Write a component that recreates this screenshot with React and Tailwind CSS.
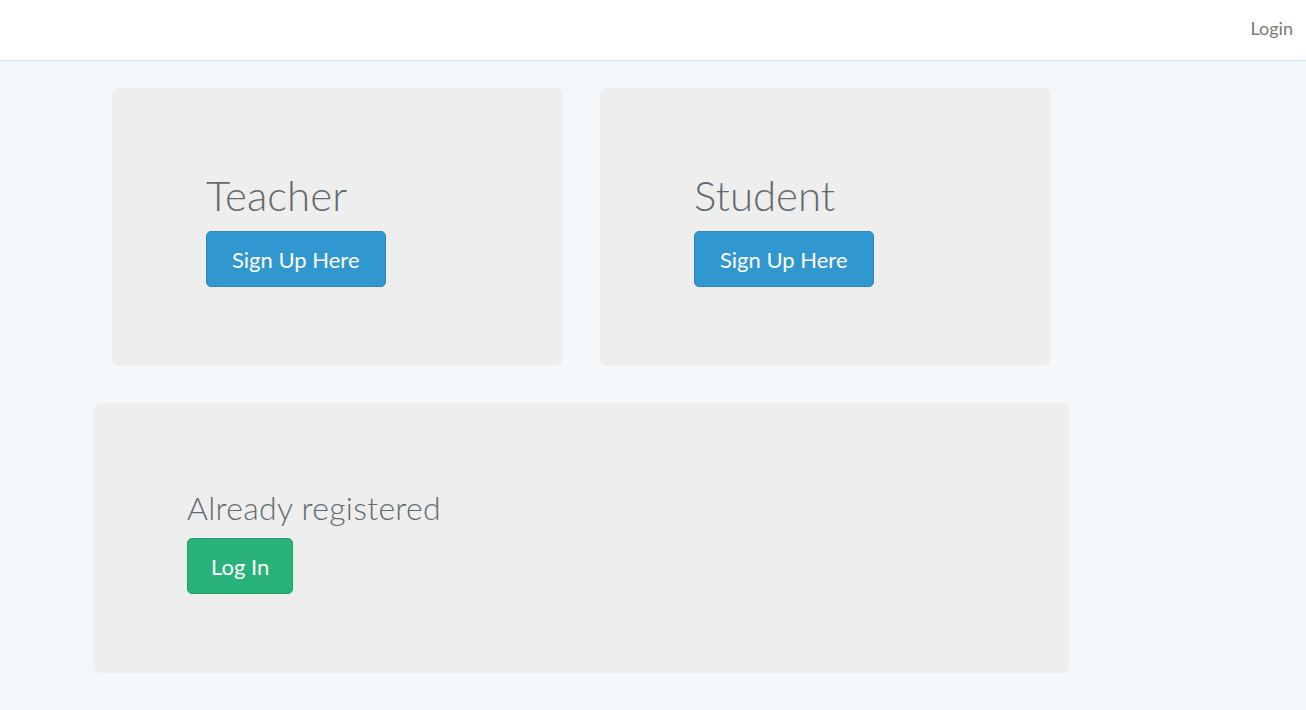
import React from 'react';

const font = { fontFamily: 'Lato, "Open Sans", sans-serif' };

const SignUpCard = ({ title }) => (
  <div className="w-[450px] h-[278px] bg-[#eeeeee] rounded-md pl-[94px] pt-[85px]">
    <h1 className="text-[42px] leading-[44px] text-[#636b6f] font-light">{title}</h1>
    <button className="mt-[14px] h-[56px] px-[25px] bg-[#3097d1] border border-[#2a88bd] rounded-[5px] text-white text-[22px]">
      Sign Up Here
    </button>
  </div>
);

export default function App() {
  return (
    <div className="min-h-[710px] bg-[#f5f8fa]" style={font}>
      <nav className="h-[61px] bg-white border-b border-[#d3e0e9] flex items-center justify-end pr-[13px]">
        <a href="#" className="text-[18px] text-[#7a7a7a] pb-[4px]">Login</a>
      </nav>

      <div className="pt-[27px] flex flex-col gap-[37px]">
        <div className="flex gap-[38px] pl-[112px]">
          <SignUpCard title="Teacher" />
          <SignUpCard title="Student" />
        </div>

        <div className="ml-[94px] w-[975px] h-[270px] bg-[#eeeeee] rounded-md pl-[93px] pt-[87px]">
          <h2 className="text-[32px] leading-[36px] text-[#636b6f] font-light tracking-[0.3px]">Already registered</h2>
          <button className="mt-[12px] h-[56px] px-[23px] bg-[#2ab27b] border border-[#259d6d] rounded-[5px] text-white text-[22px]">
            Log In
          </button>
        </div>
      </div>
    </div>
  );
}
